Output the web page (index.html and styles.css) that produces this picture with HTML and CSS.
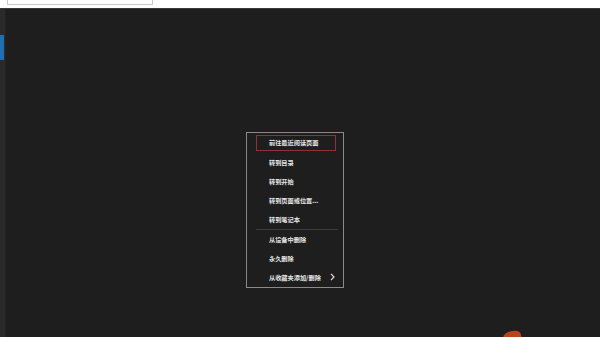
FILE: index.html
```html
<!DOCTYPE html>
<html lang="zh">
<head>
<meta charset="utf-8">
<link rel="stylesheet" href="styles.css">
</head>
<body>
<div class="topbar"><div class="search"></div></div>
<div class="main">
  <div class="rail"><div class="rail-active"></div></div>
  <div class="canvas"></div>
</div>
<div class="menu">
  <div class="item focused">前往最近阅读页面</div>
  <div class="item">转到目录</div>
  <div class="item">转到开始</div>
  <div class="item">转到页面或位置...</div>
  <div class="item">转到笔记本</div>
  <div class="sep"></div>
  <div class="item">从设备中删除</div>
  <div class="item">永久删除</div>
  <div class="item sub">从收藏夹添加/删除<svg class="chev" width="5" height="8" viewBox="0 0 5 8"><path d="M1 0.8 L4 4 L1 7.2" fill="none" stroke="#e8e8e8" stroke-width="1.1"/></svg></div>
</div>
<div class="blob"></div>
</body>
</html>
```
FILE: styles.css
```css
html, body {
  margin: 0;
  padding: 0;
  width: 600px;
  height: 337px;
  overflow: hidden;
  background: #1f1f1f;
  font-family: "Noto Sans CJK SC", "Noto Sans", sans-serif;
}
.topbar {
  height: 9px;
  background: #ffffff;
  border-bottom: 1px solid #3a3a3a;
  box-sizing: border-box;
  padding-left: 7px;
}
.search {
  width: 146px;
  height: 5px;
  border: 1px solid #c8c8c8;
  border-top: none;
  box-sizing: border-box;
}
.main {
  display: flex;
  height: 328px;
}
.rail {
  width: 5px;
  background: #2a2a2a;
  border-right: 1px solid #232323;
  padding-top: 26px;
}
.rail-active {
  width: 4px;
  height: 25px;
  background: #1e6fb4;
}
.canvas {
  flex: 1;
  background: #1e1e1e;
}
.menu {
  position: absolute;
  left: 246px;
  top: 132px;
  width: 98px;
  height: 156px;
  box-sizing: border-box;
  border: 1px solid #8a8a8a;
  background: #1e1e1e;
  padding: 2px 7px 0 9px;
  display: flex;
  flex-direction: column;
}
.item {
  height: 19.4px;
  display: flex;
  align-items: center;
  padding-left: 13px;
  font-size: 6.2px;
  font-weight: 700;
  color: #e6e6e6;
  box-sizing: border-box;
  white-space: nowrap;
}
.item.focused {
  height: 16px;
  border: 1px solid #94303a;
  padding-left: 12px;
  margin-bottom: 2px;
}
.sep {
  height: 1px;
  background: #3c3c3c;
  margin: 0 -2px 0 0;
}
.chev {
  margin-left: 9px;
}
.blob {
  position: absolute;
  left: 503px;
  top: 331px;
  width: 18px;
  height: 10px;
  border-radius: 50% 50% 0 0;
  background: #b8441e;
  transform: rotate(-14deg);
}
```
